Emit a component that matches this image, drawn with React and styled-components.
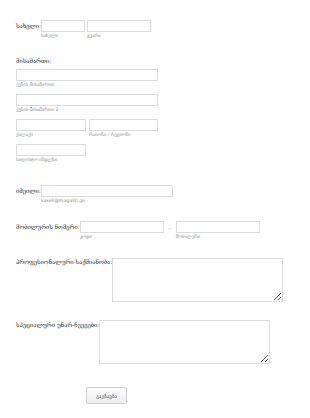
import React from 'react';
import styled, { createGlobalStyle } from 'styled-components';

const GlobalStyle = createGlobalStyle`
  html, body {
    margin: 0;
    padding: 0;
    background: #fff;
  }
`;

const Form = styled.form`
  padding: 20px 0 0 16px;
  width: 310px;
  box-sizing: border-box;
`;

const Row = styled.div`
  display: flex;
  align-items: flex-start;
  margin-top: ${(p) => p.$top || 0}px;
`;

const Label = styled.label`
  font-family: "DejaVu Serif", serif;
  font-size: 5.85px;
  line-height: ${(p) => p.$lh || 12}px;
  color: #333;
  white-space: nowrap;
`;

const Heading = styled.div`
  font-family: "DejaVu Serif", serif;
  font-size: 5.85px;
  line-height: 8px;
  color: #333;
  margin-top: 18px;
`;

const Fields = styled.div`
  display: flex;
  align-items: flex-start;
  gap: ${(p) => p.$gap || 2}px;
`;

const Field = styled.div`
  display: flex;
  flex-direction: column;
  margin-top: ${(p) => p.$top || 0}px;
`;

const Input = styled.input`
  box-sizing: border-box;
  width: ${(p) => p.$w}px;
  height: 12px;
  margin: 0;
  padding: 0 2px;
  border: 1px solid #dcdcdc;
  background: #fff;
  outline: none;
`;

const Sub = styled.span`
  font-family: "DejaVu Sans", sans-serif;
  font-size: 4.7px;
  line-height: 6px;
  margin-top: 1px;
  color: #8f8f8f;
  white-space: nowrap;
`;

const Dash = styled.span`
  width: 8px;
  text-align: center;
  font-family: "DejaVu Sans", sans-serif;
  font-size: 6px;
  line-height: 13px;
  color: #999;
`;

const TextArea = styled.textarea`
  box-sizing: border-box;
  width: 171px;
  height: 44px;
  margin: 0;
  border: 1px solid #dcdcdc;
  background: #fff;
  outline: none;
`;

const Button = styled.button`
  margin: 23px 0 0 70px;
  width: 41px;
  height: 17px;
  padding: 0;
  font-family: "DejaVu Sans", sans-serif;
  font-size: 5px;
  color: #555;
  border: 1px solid #d0d0d0;
  border-radius: 2px;
  background: linear-gradient(#fdfdfd, #eeeeee);
`;

const App = () => (
  <>
    <GlobalStyle />
    <Form onSubmit={(e) => e.preventDefault()}>
      <Row>
        <Label>სახელი:</Label>
        <Fields>
          <Field>
            <Input $w={44} />
            <Sub>სახელი</Sub>
          </Field>
          <Field>
            <Input $w={64} />
            <Sub>გვარი</Sub>
          </Field>
        </Fields>
      </Row>

      <Heading>მისამართი:</Heading>
      <Field $top={4}>
        <Input $w={142} />
        <Sub>ქუჩის მისამართი</Sub>
      </Field>
      <Field $top={6}>
        <Input $w={142} />
        <Sub>ქუჩის მისამართი 2</Sub>
      </Field>
      <Fields $gap={3}>
        <Field $top={6}>
          <Input $w={70} />
          <Sub>ქალაქი</Sub>
        </Field>
        <Field $top={6}>
          <Input $w={69} />
          <Sub>რაიონი / რეგიონი</Sub>
        </Field>
      </Fields>
      <Field $top={6}>
        <Input $w={70} />
        <Sub>საფოსტო ინდექსი</Sub>
      </Field>

      <Row $top={22}>
        <Label>იმეილი:</Label>
        <Field>
          <Input $w={132} />
          <Sub>saxeli@magaliti.ge</Sub>
        </Field>
      </Row>

      <Row $top={17}>
        <Label>მობილურის ნომერი:</Label>
        <Fields $gap={0}>
          <Field>
            <Input $w={84} />
            <Sub>კოდი</Sub>
          </Field>
          <Dash>-</Dash>
          <Field>
            <Input $w={84} />
            <Sub>მობილური</Sub>
          </Field>
        </Fields>
      </Row>

      <Row $top={18}>
        <Label $lh={9}>პროფესიონალური საქმიანობა:</Label>
        <TextArea />
      </Row>

      <Row $top={18}>
        <Label $lh={10}>სპეციალური უნარ-ჩვევები:</Label>
        <TextArea />
      </Row>

      <Button type="submit">გაგზავნა</Button>
    </Form>
  </>
);

export default App;
